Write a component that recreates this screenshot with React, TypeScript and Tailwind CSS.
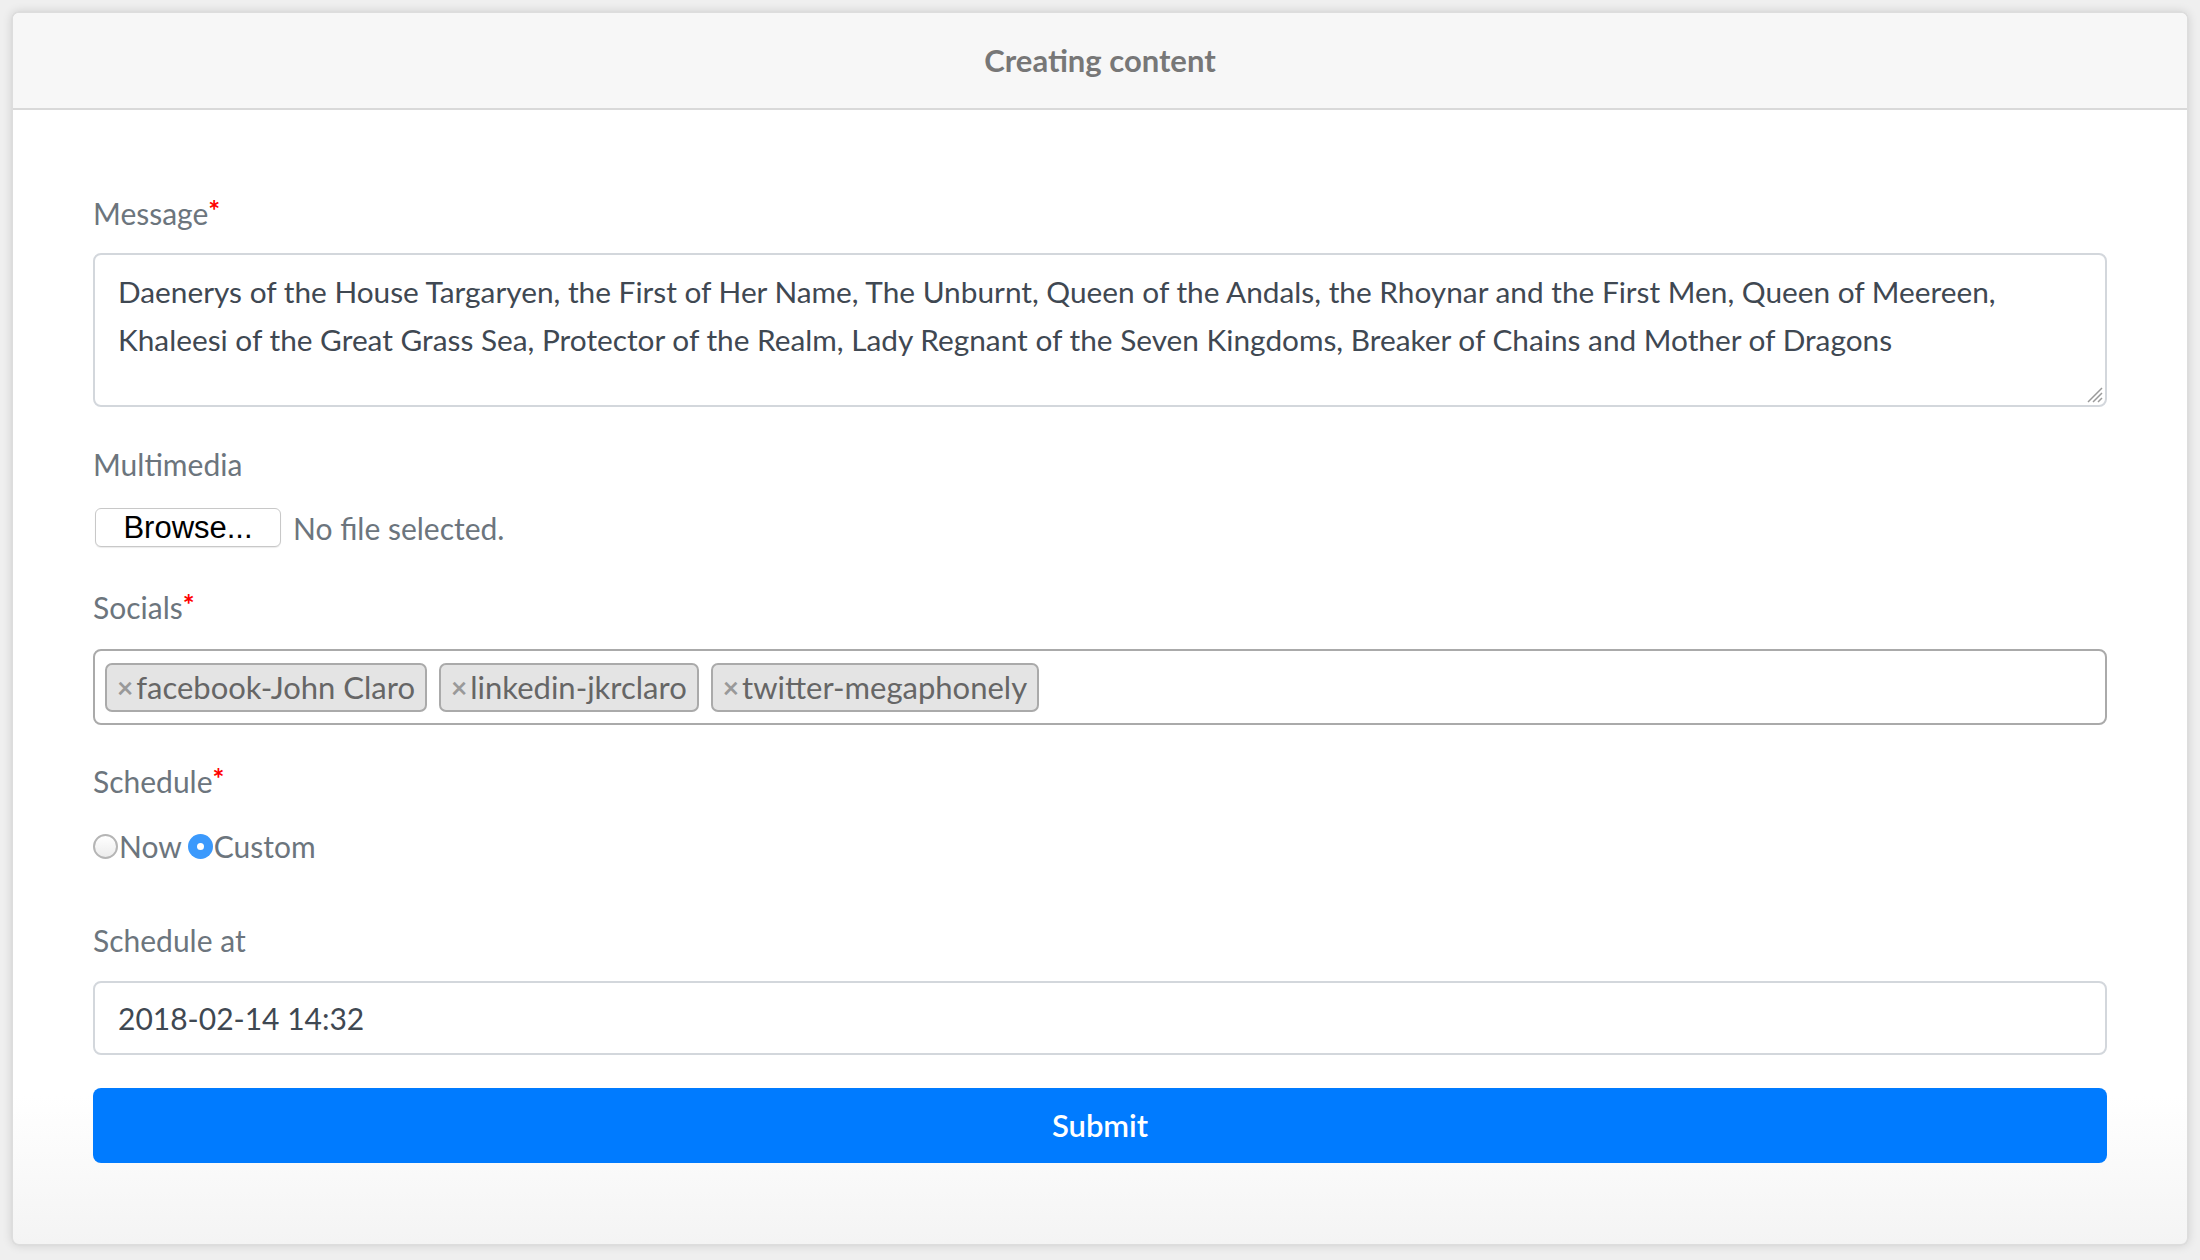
import React from "react";

const font = { fontFamily: "Lato, 'Noto Sans', sans-serif" };

function Label({ text, required }: { text: string; required?: boolean }) {
  return (
    <div className="text-[30px] leading-[40px] text-[#6c757d]">
      {text}
      {required && (
        <span className="text-[#ff0000] text-[28px] font-bold align-top relative -top-[3px]">*</span>
      )}
    </div>
  );
}

function Tag({ text }: { text: string }) {
  return (
    <div className="flex items-center h-[49px] px-[10px] bg-[#e4e4e4] border-2 border-[#aaaaaa] rounded-[7px] text-[31px] leading-none text-[#666666]">
      <span className="text-[28px] text-[#999999] font-bold mr-[3px]">×</span>
      {text}
    </div>
  );
}

function Radio({ checked }: { checked?: boolean }) {
  if (checked) {
    return (
      <span className="w-[25px] h-[25px] rounded-full bg-[#3b99fc] flex items-center justify-center">
        <span className="w-[7px] h-[7px] rounded-full bg-white" />
      </span>
    );
  }
  return (
    <span className="w-[25px] h-[25px] rounded-full border-2 border-[#b5b5b5] bg-gradient-to-b from-white to-[#ececec]" />
  );
}

export default function App() {
  return (
    <div className="min-h-screen bg-[#efefef] p-[11px]" style={font}>
      <div className="h-[1235px] rounded-[8px] border-2 border-[#dddddd] bg-gradient-to-b from-white from-[88%] to-[#f4f4f4] shadow-[0_0_10px_rgba(0,0,0,0.12)] overflow-hidden">
        {/* Header */}
        <div className="h-[97px] bg-[#f7f7f7] border-b-2 border-[#d9d9d9] flex items-center justify-center">
          <h1 className="text-[31px] font-bold text-[#777777]">Creating content</h1>
        </div>

        {/* Form */}
        <div className="px-[80px] pt-[83px]">
          <Label text="Message" required />
          <div className="relative mt-[20px] h-[154px] border-2 border-[#d3d7dc] rounded-[8px] px-[23px] pt-[13px] text-[29.8px] leading-[48px] text-[#3f4852]">
            <div>
              Daenerys of the House Targaryen, the First of Her Name, The Unburnt, Queen of the Andals, the Rhoynar and the First Men, Queen of Meereen,
            </div>
            <div>
              Khaleesi of the Great Grass Sea, Protector of the Realm, Lady Regnant of the Seven Kingdoms, Breaker of Chains and Mother of Dragons
            </div>
            <svg className="absolute right-[2px] bottom-[2px]" width="20" height="20" viewBox="0 0 20 20">
              <path d="M19 5 L5 19 M19 10 L10 19 M19 15 L15 19" stroke="#9a9a9a" strokeWidth="1.5" />
            </svg>
          </div>

          <div className="mt-[37px]">
            <Label text="Multimedia" />
          </div>
          <div className="mt-[24px] h-[39px] flex items-center leading-none">
            <button
              className="h-[39px] w-[186px] ml-[2px] bg-white border border-[#c8c8c8] rounded-[6px] shadow-[0_1px_1px_rgba(0,0,0,0.08)] text-[31px] leading-none text-black"
              style={{ fontFamily: "'Liberation Sans', Arial, sans-serif" }}
            >
              Browse...
            </button>
            <span className="ml-[12px] text-[30px] text-[#6c757d]">No file selected.</span>
          </div>

          <div className="mt-[40px]">
            <Label text="Socials" required />
          </div>
          <div className="mt-[22px] h-[76px] border-2 border-[#aaaaaa] rounded-[8px] px-[10px] flex items-center gap-[12px]">
            <Tag text="facebook-John Claro" />
            <Tag text="linkedin-jkrclaro" />
            <Tag text="twitter-megaphonely" />
          </div>

          <div className="mt-[36px]">
            <Label text="Schedule" required />
          </div>
          <div className="mt-[25px] h-[40px] flex items-center text-[30px] leading-none text-[#6c757d]">
            <Radio />
            <span className="ml-[1px]">Now</span>
            <span className="ml-[6px]">
              <Radio checked />
            </span>
            <span className="ml-[1px]">Custom</span>
          </div>

          <div className="mt-[54px]">
            <Label text="Schedule at" />
          </div>
          <div className="mt-[21px] h-[74px] border-2 border-[#d3d7dc] rounded-[8px] px-[23px] flex items-center text-[30px] text-[#3f4852]">
            2018-02-14 14:32
          </div>

          <button className="mt-[33px] w-full h-[75px] bg-[#007bff] rounded-[8px] text-white text-[31px] font-semibold">
            Submit
          </button>
        </div>
      </div>
    </div>
  );
}
